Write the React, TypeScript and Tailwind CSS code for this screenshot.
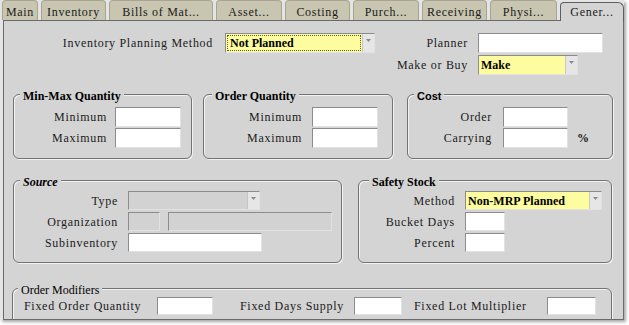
import { FC, ReactNode } from 'react';

const LABEL = "font-['Liberation_Serif',serif] text-[12px] tracking-[0.7px] text-[#1a1a1a] whitespace-nowrap";
const VALUE = "font-['Liberation_Serif',serif] text-[12px] font-bold text-black whitespace-nowrap";
const FIELD = 'border border-t-[#8c8c8c] border-l-[#8c8c8c] border-r-[#e2e2e2] border-b-[#e2e2e2]';
const SERIF_TITLE = "font-['Liberation_Serif',serif] text-[12px] font-bold text-black";

const tabs = [
  { name: 'Main', w: 'w-[36px]' },
  { name: 'Inventory', w: 'w-[65px]' },
  { name: 'Bills of Mat...', w: 'w-[104px]' },
  { name: 'Asset...', w: 'w-[66px]' },
  { name: 'Costing', w: 'w-[65px]' },
  { name: 'Purch...', w: 'w-[66px]' },
  { name: 'Receiving', w: 'w-[65px]' },
  { name: 'Physi...', w: 'w-[67px]' },
];

const Arrow: FC = () => (
  <span className="flex h-full w-[12px] shrink-0 justify-center border-l border-[#c6c6c6] bg-[#e6e6e6] pt-[5px]">
    <svg width="5" height="3" viewBox="0 0 5 3">
      <path d="M0 0h5L2.5 3z" fill="#8a8a8a" />
    </svg>
  </span>
);

const Select: FC<{ value?: string; className: string; disabled?: boolean; focus?: boolean }> = ({
  value,
  className,
  disabled,
  focus,
}) => (
  <div className={`flex shrink-0 ${FIELD} ${disabled ? 'bg-[#d2d2d2]' : 'bg-[#fdfd9f]'} ${className}`}>
    <div
      className={`flex flex-1 items-center pl-[2px] ${VALUE} ${focus ? 'm-px border border-dotted border-[#5a5a40]' : ''}`}
    >
      {value}
    </div>
    <Arrow />
  </div>
);

const Input: FC<{ className: string; disabled?: boolean }> = ({ className, disabled }) => (
  <div className={`shrink-0 ${FIELD} ${disabled ? 'bg-[#d2d2d2]' : 'bg-white'} ${className}`} />
);

const Label: FC<{ className?: string; children: ReactNode }> = ({ className = 'text-right', children }) => (
  <span className={`shrink-0 ${LABEL} ${className}`}>{children}</span>
);

// legend box is shorter than its line so the caption hangs a little below the frame line
const Group: FC<{ title: string; legend: string; className: string; children: ReactNode }> = ({
  title,
  legend,
  className,
  children,
}) => (
  <fieldset
    className={`shrink-0 rounded-[6px] border border-[#737373] shadow-[inset_1px_1px_0_#f2f2f2,1px_1px_0_#f2f2f2] ${className}`}
  >
    <legend className={`h-[10px] bg-[#d4d4d4] px-[3px] leading-[14px] ${legend}`}>{title}</legend>
    {children}
  </fieldset>
);

export default function App() {
  return (
    <div className="h-[325px] w-[629px] overflow-hidden bg-white">
      <div className="h-[320px] w-[624px] bg-[#e4e4e4] shadow-[2px_2px_3px_rgba(0,0,0,0.35)]">
        {/* tab strip */}
        <div className="flex h-[20px] items-end gap-[3px] pl-[2px]">
          {tabs.map(t => (
            <div
              key={t.name}
              className={`flex h-[20px] ${t.w} items-center justify-center rounded-t-[4px] border border-b-0 border-[#a7a592] bg-[#c8c6b1] pt-[2px] ${LABEL}`}
            >
              {t.name}
            </div>
          ))}
          <div
            className={`relative z-10 -mb-px flex h-[19px] w-[64px] items-center justify-center rounded-t-[4px] rounded-tr-[6px] border border-b-0 border-[#5e5e5e] bg-[#d4d4d4] ${LABEL}`}
          >
            Gener...
          </div>
        </div>

        {/* page */}
        <div className="ml-[3px] h-[300px] w-[621px] overflow-hidden border border-[#6a6a6a] bg-[#d4d4d4]">
          {/* planning row */}
          <div className="flex pt-[12px]">
            <div className="flex h-[20px] items-center">
              <Label className="w-[209px] text-right">Inventory Planning Method</Label>
              <Select value="Not Planned" focus className="ml-[12px] h-[20px] w-[150px]" />
            </div>
            <div className="flex flex-col gap-[2px]">
              <div className="flex h-[20px] items-center">
                <Label className="w-[93px] text-right">Planner</Label>
                <Input className="ml-[10px] h-[20px] w-[125px]" />
              </div>
              <div className="flex h-[20px] items-center">
                <Label className="w-[93px] text-right">Make or Buy</Label>
                <Select value="Make" className="ml-[10px] h-[20px] w-[100px]" />
              </div>
            </div>
          </div>

          {/* quantities and cost */}
          <div className="mt-[14px] flex">
            <Group title="Min-Max Quantity" legend={`ml-[6px] ${SERIF_TITLE}`} className="ml-[9px] w-[179px]">
              <div className="flex flex-col gap-[1px] pb-[10px] pt-[8px]">
                {['Minimum', 'Maximum'].map(l => (
                  <div key={l} className="flex h-[20px] items-center">
                    <Label className="w-[93px] text-right">{l}</Label>
                    <Input className="ml-[8px] h-[20px] w-[66px]" />
                  </div>
                ))}
              </div>
            </Group>
            <Group title="Order Quantity" legend={`ml-[8px] ${SERIF_TITLE}`} className="ml-[11px] w-[190px]">
              <div className="flex flex-col gap-[1px] pb-[10px] pt-[8px]">
                {['Minimum', 'Maximum'].map(l => (
                  <div key={l} className="flex h-[20px] items-center">
                    <Label className="w-[98px] text-right">{l}</Label>
                    <Input className="ml-[10px] h-[20px] w-[66px]" />
                  </div>
                ))}
              </div>
            </Group>
            <Group
              title="Cost"
              legend="ml-[6px] font-['Liberation_Sans',sans-serif] text-[11px] font-bold text-black"
              className="ml-[14px] w-[206px]"
            >
              <div className="flex flex-col gap-[1px] pb-[10px] pt-[8px]">
                <div className="flex h-[20px] items-center">
                  <Label className="w-[84px] text-right">Order</Label>
                  <Input className="ml-[11px] h-[20px] w-[65px]" />
                </div>
                <div className="flex h-[20px] items-center">
                  <Label className="w-[84px] text-right">Carrying</Label>
                  <Input className="ml-[11px] h-[20px] w-[65px]" />
                  <span className={`ml-[9px] font-bold ${LABEL}`}>%</span>
                </div>
              </div>
            </Group>
          </div>

          {/* source and safety stock */}
          <div className="mt-[16px] flex">
            <Group title="Source" legend={`ml-[6px] italic ${SERIF_TITLE}`} className="ml-[9px] w-[329px]">
              <div className="flex flex-col gap-[2px] pb-[10px] pt-[6px]">
                <div className="flex h-[19px] items-center">
                  <Label className="w-[104px] text-right">Type</Label>
                  <Select disabled className="ml-[10px] h-[19px] w-[132px]" />
                </div>
                <div className="flex h-[19px] items-center">
                  <Label className="w-[104px] text-right">Organization</Label>
                  <Input disabled className="ml-[10px] h-[19px] w-[32px]" />
                  <Input disabled className="ml-[8px] h-[19px] w-[164px]" />
                </div>
                <div className="flex h-[19px] items-center">
                  <Label className="w-[104px] text-right">Subinventory</Label>
                  <Input className="ml-[10px] h-[19px] w-[134px]" />
                </div>
              </div>
            </Group>
            <Group title="Safety Stock" legend={`ml-[10px] ${SERIF_TITLE}`} className="ml-[16px] w-[254px]">
              <div className="flex flex-col gap-[2px] pb-[10px] pt-[6px]">
                <div className="flex h-[19px] items-center">
                  <Label className="w-[96px] text-right">Method</Label>
                  <Select value="Non-MRP Planned" className="ml-[10px] h-[19px] w-[137px]" />
                </div>
                <div className="flex h-[19px] items-center">
                  <Label className="w-[96px] text-right">Bucket Days</Label>
                  <Input className="ml-[10px] h-[19px] w-[40px]" />
                </div>
                <div className="flex h-[19px] items-center">
                  <Label className="w-[96px] text-right">Percent</Label>
                  <Input className="ml-[10px] h-[19px] w-[40px]" />
                </div>
              </div>
            </Group>
          </div>

          {/* order modifiers */}
          <div className="mt-[20px] flex">
            <Group
              title="Order Modifiers"
              legend="ml-[5px] px-[2px] font-['Liberation_Serif',serif] text-[12px] text-black"
              className="ml-[8px] w-[600px]"
            >
              <div className="mb-[10px] mt-[4px] flex h-[18px] items-center pl-[11px]">
                <Label className="w-[120px] text-left">Fixed Order Quantity</Label>
                <Input className="ml-[13px] h-[18px] w-[56px]" />
                <Label className="ml-[27px] w-[102px] text-left">Fixed Days Supply</Label>
                <Input className="ml-[12px] h-[18px] w-[48px]" />
                <Label className="ml-[12px] w-[120px] text-left">Fixed Lot Multiplier</Label>
                <Input className="ml-[13px] h-[18px] w-[49px]" />
              </div>
            </Group>
          </div>
        </div>
      </div>
    </div>
  );
}
